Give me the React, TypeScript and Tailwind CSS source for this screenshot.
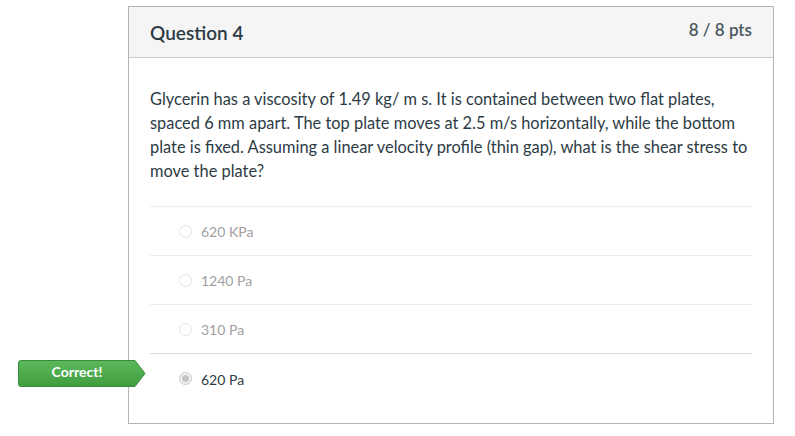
import React from 'react'

const answers = [
  { label: '620 KPa', selected: false },
  { label: '1240 Pa', selected: false },
  { label: '310 Pa', selected: false },
  { label: '620 Pa', selected: true },
]

function Radio({ selected }: { selected: boolean }) {
  if (selected) {
    return (
      <span className="flex h-[13px] w-[13px] items-center justify-center rounded-full border border-[#c8c8c8] bg-[#f2f2f2]">
        <span className="h-[7px] w-[7px] rounded-full bg-[#c4c4c4]" />
      </span>
    )
  }
  return <span className="h-[13px] w-[13px] rounded-full border border-[#e2e2e2] bg-white" />
}

function CorrectBadge() {
  return (
    <div className="absolute left-[18px] top-[360px] h-[27px] w-[128px]">
      <svg className="absolute inset-0" width="128" height="27" viewBox="0 0 128 27">
        <defs>
          <linearGradient id="g" x1="0" y1="0" x2="0" y2="1">
            <stop offset="0" stopColor="#5cb85c" />
            <stop offset="1" stopColor="#3f9d3f" />
          </linearGradient>
        </defs>
        <path d="M3 0.5 H117 L127 13.5 L117 26.5 H3 Q0.5 26.5 0.5 24 V3 Q0.5 0.5 3 0.5 Z" fill="url(#g)" stroke="#3a8a3a" strokeWidth="1" />
      </svg>
      <div className="relative flex h-full w-[118px] items-center justify-center pb-[4px] text-[14px] font-bold text-white">
        Correct!
      </div>
    </div>
  )
}

export default function App() {
  return (
    <div className="relative h-[436px] w-[795px] bg-white pt-[6px] font-['Lato','Liberation_Sans',sans-serif] text-[#2d3b45]">
      <div className="ml-[128px] w-[646px] border border-[#b4b4b4]">
        <div className="flex h-[51px] items-start justify-between border-b border-[#c7cdd1] bg-[#f5f5f5] pl-[21px] pr-[21px]">
          <h2 className="mt-[12px] text-[19px] font-semibold text-[#2d3b45]">Question 4</h2>
          <span className="mt-[10px] text-[17px] font-semibold text-[#4a5761]">8 / 8 pts</span>
        </div>
        <div className="px-[21px] pb-[21px] pt-[29px]">
          <p className="text-[16.4px] leading-[24px] text-[#2d3b45]">
            Glycerin has a viscosity of 1.49 kg/ m s. It is contained between two flat plates, spaced 6 mm apart. The top
            plate moves at 2.5 m/s horizontally, while the bottom plate is fixed. Assuming a linear velocity profile (thin
            gap), what is the shear stress to move the plate?
          </p>
          <div className="mt-[23px]">
            {answers.map((a, i) => (
              <div
                key={a.label}
                className={`flex h-[49px] items-center gap-[9px] border-t pl-[29px] ${i === 3 ? 'border-[#dadada]' : 'border-[#ececec]'}`}
              >
                <Radio selected={a.selected} />
                <span className={`text-[14px] ${a.selected ? 'mt-[2px] text-[#2d3b45]' : 'text-[#a0a0a0]'}`}>{a.label}</span>
              </div>
            ))}
          </div>
        </div>
      </div>
      <CorrectBadge />
    </div>
  )
}
